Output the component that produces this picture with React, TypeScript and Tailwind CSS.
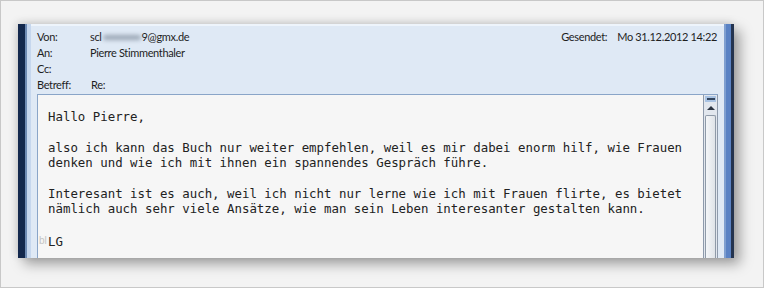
import React from "react";

function HeaderRow({ label, children }: { label: string; children?: React.ReactNode }) {
  return (
    <div className="flex h-[16px] items-center">
      <span className="w-[53px] shrink-0">{label}</span>
      <span className="flex items-center">{children}</span>
    </div>
  );
}

export default function App() {
  return (
    <div className="h-[288px] w-[764px] overflow-hidden border border-[#c8c8c8] bg-[#f3f3f3]">
      <div className="ml-[17px] mt-[23px] flex h-[234px] w-[716px] shadow-[6px_6px_12px_rgba(0,0,0,0.35),-2px_-2px_8px_rgba(0,0,0,0.12)]">
        {/* left frame */}
        <div className="w-[7px] bg-[#13284d]" />
        <div className="w-[2px] bg-[#6e8bb4]" />
        <div className="w-[4px] bg-[#c6d7ee]" />

        {/* main */}
        <div className="flex flex-1 flex-col bg-[#dfe9f5] text-[11px] tracking-[-0.35px] text-[#1e1e1e] [font-family:Lato,'Noto_Sans',sans-serif]">
          <div className="h-[2px] bg-[#eef4fb]" />
          <div className="flex pl-[6px] pr-[7px] pt-[3px]">
            <div className="flex-1">
              <HeaderRow label="Von:">
                <span>scl</span>
                <span className="mx-[1px] inline-block h-[5px] w-[38px] rounded-full bg-[#9aa6b4] blur-[2px]" />
                <span>9@gmx.de</span>
              </HeaderRow>
              <HeaderRow label="An:">Pierre Stimmenthaler</HeaderRow>
              <HeaderRow label="Cc:" />
              <HeaderRow label="Betreff:">
                <span className="pl-[1px]">Re:</span>
              </HeaderRow>
            </div>
            <div className="flex h-[16px] items-center">
              <span className="mr-[10px]">Gesendet:</span>
              <span>Mo 31.12.2012 14:22</span>
            </div>
          </div>

          {/* body */}
          <div className="ml-[6px] mr-[6px] mt-[1px] flex flex-1 overflow-hidden border-l border-t border-[#8aa5c8] bg-[#f6f6f6] tracking-normal">
            <div className="relative flex-1 pl-[10px] pt-[14px] font-['DejaVu_Sans_Mono',monospace] text-[12.4px] leading-[15.4px] text-[#222] whitespace-pre">
              <div>Hallo Pierre,</div>
              <div>&nbsp;</div>
              <div>also ich kann das Buch nur weiter empfehlen, weil es mir dabei enorm hilf, wie Frauen</div>
              <div>denken und wie ich mit ihnen ein spannendes Gespräch führe.</div>
              <div>&nbsp;</div>
              <div>Interesant ist es auch, weil ich nicht nur lerne wie ich mit Frauen flirte, es bietet</div>
              <div>nämlich auch sehr viele Ansätze, wie man sein Leben interesanter gestalten kann.</div>
              <div className="h-[17px]">&nbsp;</div>
              <div className="relative">
                <span className="absolute left-[-9px] top-[-1px] font-['Liberation_Sans',sans-serif] text-[10px] text-[#c4c4c4]">bl</span>
                LG
              </div>
            </div>

            {/* scrollbar */}
            <div className="flex w-[15px] flex-col border-x border-[#8e9aab] bg-[#e2e7ee]">
              <div className="mx-[1px] mt-[1px] flex h-[6px] items-center justify-center bg-[#a9c3e3]">
                <div className="h-[2px] w-[8px] bg-[#33465f]" />
              </div>
              <div className="mt-[4px] flex justify-center">
                <div className="h-0 w-0 border-x-[4px] border-b-[4px] border-x-transparent border-b-[#2b3442]" />
              </div>
              <div className="mx-[1px] mt-[5px] flex-1 rounded-t-[2px] border border-b-0 border-[#8f9aa8] bg-gradient-to-r from-[#f4f6f8] to-[#dfe3e8]" />
            </div>
          </div>
        </div>

        {/* right frame */}
        <div className="flex">
          <div className="w-[2px] bg-[#7f9fd0]" />
          <div className="w-[5px] bg-[#5a82c4]" />
          <div className="w-[3px] bg-[#24344f]" />
        </div>
      </div>
    </div>
  );
}
